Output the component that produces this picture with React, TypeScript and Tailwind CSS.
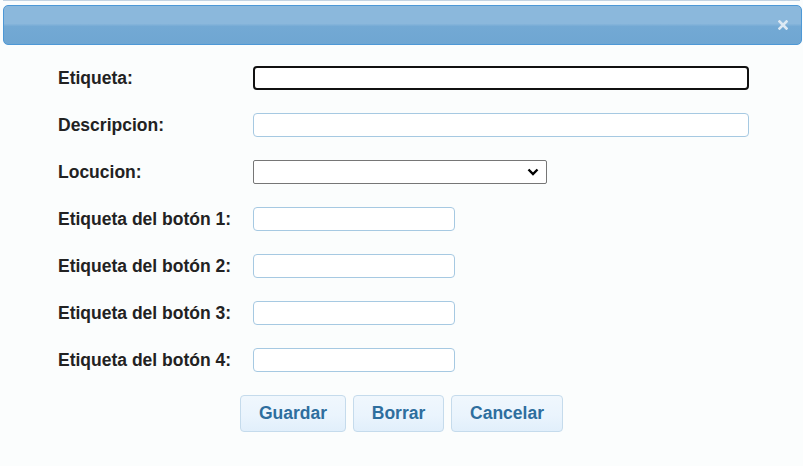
const botones = [1, 2, 3, 4];

const labelCls = "text-[17.5px] leading-6 font-bold text-[#222222]";
const inputCls =
  "h-6 rounded-[4px] border border-[#a6c9e2] bg-white px-1 text-sm outline-none";

export default function App() {
  return (
    <div
      className="h-[466px] w-[803px] overflow-hidden bg-[#fbfdfd]"
      style={{ fontFamily: '"Liberation Sans", Arial, sans-serif' }}
    >
      <div className="mx-[3px] h-[2px] border-t border-[#c3d3e2]" />
      <div className="ml-[3px] mr-px mt-[3px] flex h-10 items-center justify-end rounded-[5px] border border-[#4d98d6] bg-[linear-gradient(to_bottom,#8bb8dc_0%,#8bb8dc_46%,#73a9d4_54%,#6fa6d2_100%)] pr-[13px]">
        <svg width="10" height="10" viewBox="0 0 10 10" className="mb-[1px]">
          <path
            d="M1.5 1.5 L8.5 8.5 M8.5 1.5 L1.5 8.5"
            stroke="#dde9f4"
            strokeWidth="2.6"
            strokeLinecap="square"
          />
        </svg>
      </div>

      <div className="grid grid-cols-[195px_auto] items-center gap-y-[23px] pl-[58px] pt-[21px]">
        <span className={labelCls}>Etiqueta:</span>
        <input
          className="h-6 w-[496px] rounded-[4px] border-2 border-[#111111] bg-white px-1 text-sm outline-none"
          defaultValue=""
        />

        <span className={labelCls}>Descripcion:</span>
        <input className={`${inputCls} w-[496px]`} />

        <span className={labelCls}>Locucion:</span>
        <div className="relative h-6 w-[294px]">
          <select className="h-[24px] w-full appearance-none rounded-[2px] border border-[#767676] bg-white text-sm outline-none" />
          <svg
            width="12"
            height="8"
            viewBox="0 0 12 8"
            className="pointer-events-none absolute right-[8px] top-[8px]"
          >
            <path d="M1.5 1.5 L6 6 L10.5 1.5" stroke="#000" strokeWidth="2.4" fill="none" />
          </svg>
        </div>

        {botones.map((n) => (
          <div key={n} className="contents">
            <span className={labelCls}>Etiqueta del botón {n}:</span>
            <input className={`${inputCls} w-[202px]`} />
          </div>
        ))}
      </div>

      <div className="mt-[23px] flex justify-center gap-[7px]">
        {[
          { t: "Guardar", w: "w-[106px]" },
          { t: "Borrar", w: "w-[91px]" },
          { t: "Cancelar", w: "w-[112px]" },
        ].map(({ t, w }) => (
          <button
            key={t}
            className={`${w} h-[37px] rounded-[4px] border border-[#c5dbec] bg-[linear-gradient(to_bottom,#f0f7fd_0%,#eaf4fd_55%,#e1effb_100%)] text-[17.5px] font-bold text-[#2e6e9e]`}
          >
            {t}
          </button>
        ))}
      </div>
    </div>
  );
}
